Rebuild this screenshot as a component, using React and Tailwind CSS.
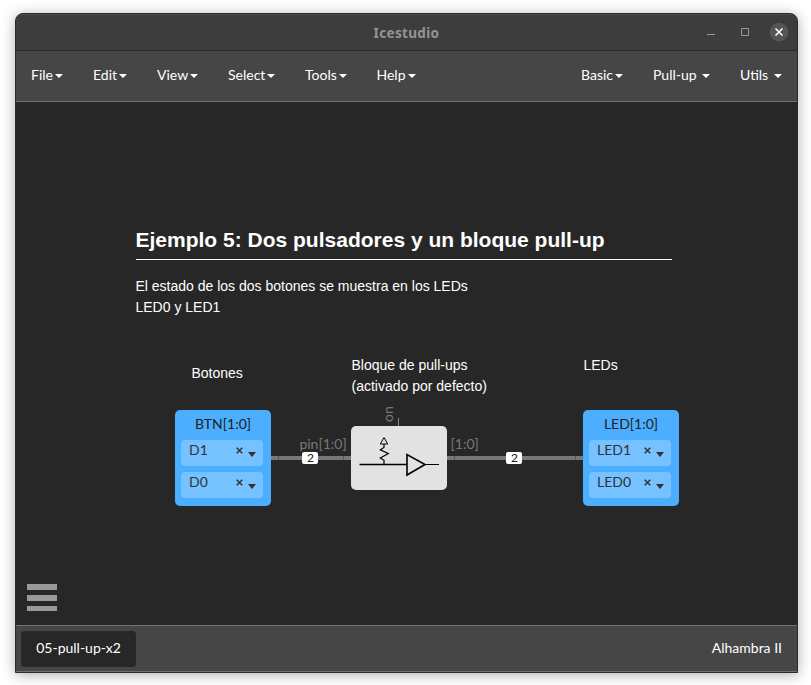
import React from "react";

const leftMenus = [
  { label: "File", width: "w-8" },
  { label: "Edit", width: "w-[34px]" },
  { label: "View", width: "w-[41px]" },
  { label: "Select", width: "w-[47px]" },
  { label: "Tools", width: "w-[41.5px]" },
  { label: "Help", width: "w-[39px]" },
];

const rightMenus = [
  { label: "Basic", width: "w-[42px]" },
  { label: "Pull-up", width: "w-[57px]" },
  { label: "Utils", width: "w-[42px]" },
];

function Caret() {
  return (
    <span className="mt-[2px] h-0 w-0 border-x-4 border-t-4 border-x-transparent border-t-white" />
  );
}

function MenuItem({ label, width }) {
  return (
    <button className={`flex items-center justify-between whitespace-nowrap ${width}`}>
      <span>{label}</span>
      <Caret />
    </button>
  );
}

function PinSelect({ value }) {
  return (
    <div className="flex h-[26px] items-center rounded bg-[#76c1ff] pl-2 pr-[7px] text-[#333]">
      <span className="-mt-[7px] flex-1">{value}</span>
      <svg className="-mt-[5px] mr-[5px]" width="7" height="7" viewBox="0 0 7 7">
        <path d="M.7.7l5.6 5.6M6.3.7L.7 6.3" stroke="#333" strokeWidth="1.5" />
      </svg>
      <span className="mt-[3px] h-0 w-0 border-x-4 border-t-[5px] border-x-transparent border-t-[#333]" />
    </div>
  );
}

function IoBlock({ title, pins, place }) {
  return (
    <div className={`absolute flex h-24 w-24 flex-col rounded-[5px] bg-[#4caeff] pl-1.5 pr-2 text-sm text-[#222] ${place}`}>
      <div className="h-[30px] pl-[2px] pt-1 text-center leading-5">{title}</div>
      <div className="flex flex-col gap-1.5">
        {pins.map((p) => (
          <PinSelect key={p} value={p} />
        ))}
      </div>
    </div>
  );
}

function Wire({ place }) {
  return (
    <div className={`absolute top-[354px] flex h-[4px] justify-between bg-[#777] px-[7px] ${place}`}>
      <span className="w-px bg-[#555]" />
      <span className="w-px bg-[#555]" />
    </div>
  );
}

function BusSize({ place }) {
  return (
    <div className={`absolute top-[350px] flex h-3 w-4 items-center justify-center rounded-[2px] bg-white text-xs font-medium leading-3 text-[#222] ${place}`}>
      2
    </div>
  );
}

function Note({ place, children }) {
  return (
    <p className={`absolute whitespace-nowrap font-['Liberation_Sans',sans-serif] text-sm leading-[21px] text-white ${place}`}>
      {children}
    </p>
  );
}

export default function App() {
  return (
    <div className="h-[685px] w-[811px] overflow-hidden bg-white pl-[15px] pt-[13px] font-['Lato',sans-serif] text-sm">
      <div className="flex h-[660px] w-[783px] flex-col overflow-hidden rounded-t-[8px] border border-[#2b2b2b] bg-[#464646] shadow-[0_2px_14px_rgba(0,0,0,0.32)]">
        <header className="flex h-[37px] shrink-0 items-center border-b border-t border-b-[#2a2a2a] border-t-[#4b4b4b] bg-[#3d3d3d]">
          <div className="w-[100px]" />
          <h1 className="flex-1 pt-[3px] text-center font-['Noto_Sans',sans-serif] text-[13.5px] font-bold tracking-[0.35px] text-[#949494]">
            Icestudio
          </h1>
          <div className="flex w-[100px] items-center pr-2">
            <svg className="-mt-px ml-auto" width="82" height="20" viewBox="0 0 82 20" fill="none">
              <path d="M0 12.500h8" stroke="#999" />
              <path d="M34.500 6.500h7v7h-7z" stroke="#999" />
              <circle cx="72" cy="10" r="9.300" fill="#555" />
              <path d="M68.500 6.500l7 7m0-7l-7 7" stroke="#fff" strokeWidth="1.600" />
            </svg>
          </div>
        </header>

        <nav className="flex h-[51px] shrink-0 items-center justify-between border-b border-[#707070] bg-[#464646] px-[15px] pb-[3px] text-white">
          <div className="flex gap-[30px]">
            {leftMenus.map((m) => (
              <MenuItem key={m.label} {...m} />
            ))}
          </div>
          <div className="flex gap-[30px]">
            {rightMenus.map((m) => (
              <MenuItem key={m.label} {...m} />
            ))}
          </div>
        </nav>

        <main className="relative h-[523px] shrink-0 bg-[#272727]">
          <div className="absolute left-[119.5px] top-[124px] w-[536.5px] font-['Liberation_Sans',sans-serif] text-white">
            <h2 className="h-[34px] whitespace-nowrap border-b border-white text-[21px] font-bold leading-[28px]">
              Ejemplo 5: Dos pulsadores y un bloque pull-up
            </h2>
            <p className="mt-4 text-sm leading-[21px]">
              El estado de los dos botones se muestra en los LEDs
              <br />
              LED0 y LED1
            </p>
          </div>

          <Note place="left-[175.5px] top-[261px]">Botones</Note>
          <Note place="left-[335.5px] top-[253px]">
            Bloque de pull-ups
            <br />
            (activado por defecto)
          </Note>
          <Note place="left-[567.5px] top-[253px]">LEDs</Note>

          <Wire place="left-[255px] w-[80px]" />
          <Wire place="left-[431px] w-[136px]" />
          <span className="absolute left-[283.4px] top-[332px] leading-5 text-[#777]">pin[1:0]</span>
          <span className="absolute left-[434.5px] top-[332px] leading-5 text-[#777]">[1:0]</span>
          <span className="absolute left-[362px] top-[302px] h-[18px] w-5 rotate-180 leading-5 text-[#777] [writing-mode:vertical-rl]">
            on
          </span>
          <span className="absolute left-[382px] top-[316px] h-2 w-px bg-[#888]" />
          <BusSize place="left-[286.4px]" />
          <BusSize place="left-[490.4px]" />

          <IoBlock title="BTN[1:0]" pins={["D1", "D0"]} place="left-[159px] top-[308px]" />
          <IoBlock title="LED[1:0]" pins={["LED1", "LED0"]} place="left-[567px] top-[308px]" />

          <div className="absolute left-[335px] top-[324px] h-16 w-24 rounded-[5px] bg-[#e2e2e2]">
            <svg width="96" height="64" viewBox="0 0 96 64" fill="none" stroke="#000">
              <path d="M8.500 38.500H56" strokeWidth="1.400" />
              <path d="M74 38.500h14" strokeWidth="1" />
              <path d="M56 28.500v20.500l18-10.500z" strokeWidth="1.600" />
              <path d="M33 11.500l-3.700 6.500h7.400z" strokeWidth="1" />
              <path d="M33 18v3.500l-3.700 2.300 8 3.700-8 4.500 3.700 2.300V38" strokeWidth="1.200" />
            </svg>
          </div>

          <button className="absolute bottom-[14px] left-[11px] flex w-[30px] flex-col gap-[5px]">
            <span className="h-[6px] bg-[#999]" />
            <span className="h-[6px] bg-[#999]" />
            <span className="h-[5px] bg-[#999]" />
          </button>
        </main>

        <footer className="flex h-[47px] shrink-0 items-center justify-between border-y border-[#707070] pl-[5px] pr-[15px] text-white">
          <div className="flex h-9 w-[115px] items-center justify-center rounded bg-[#272727] pb-px">
            05-pull-up-x2
          </div>
          <span className="pb-px">Alhambra II</span>
        </footer>
      </div>
    </div>
  );
}
